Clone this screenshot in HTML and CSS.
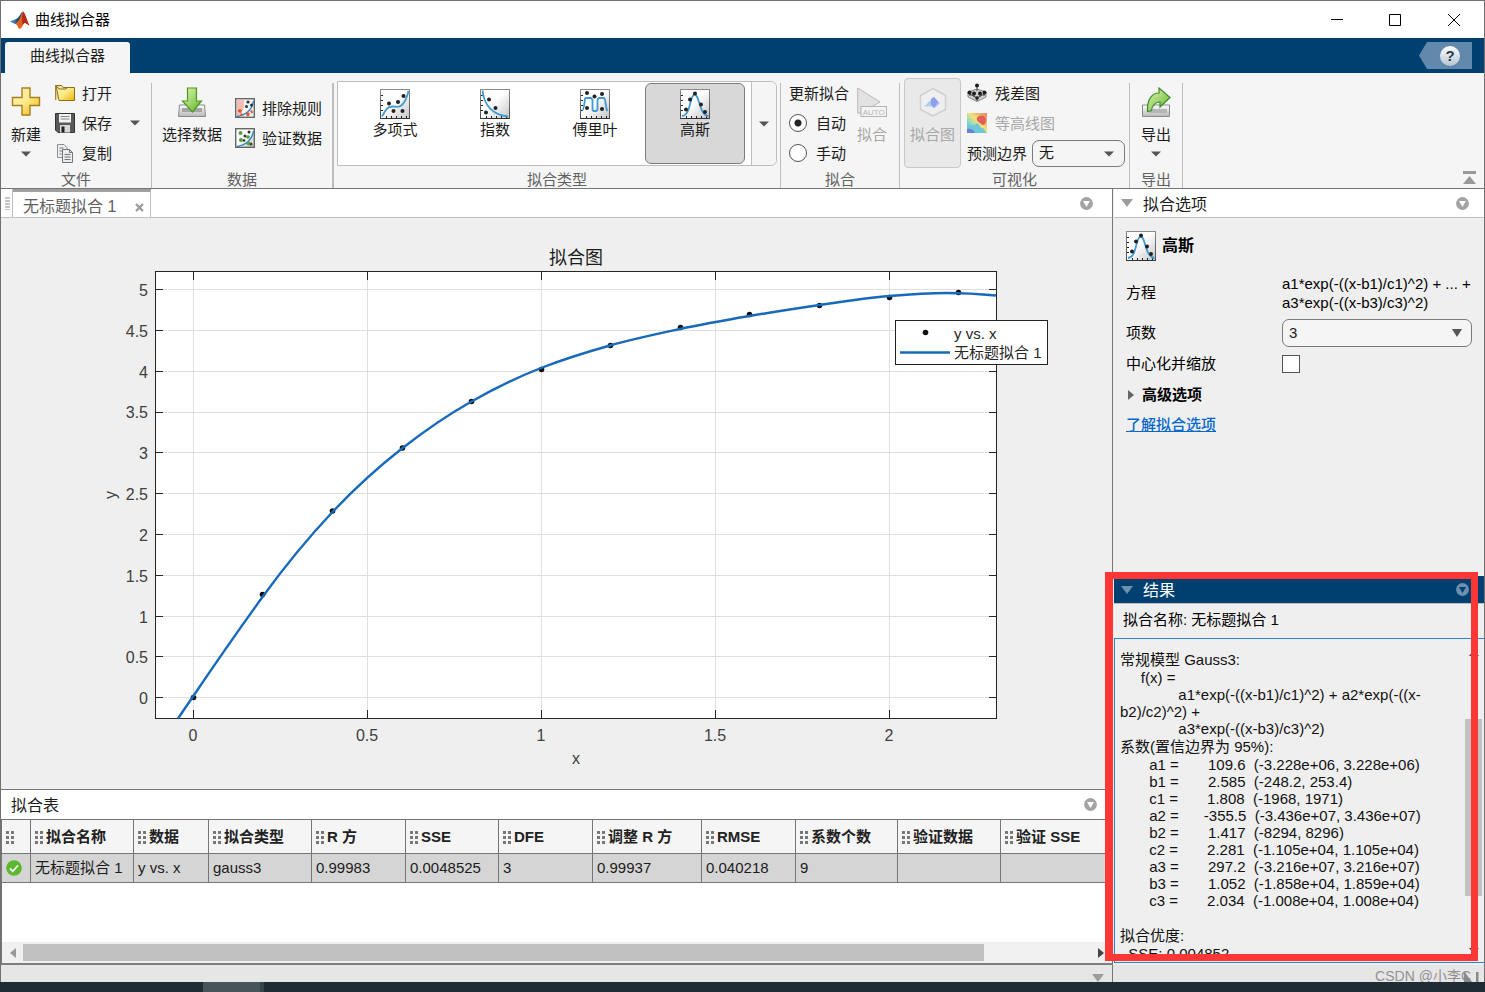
FILE: index.html
```html
<!DOCTYPE html>
<html lang="zh-CN">
<head>
<meta charset="utf-8">
<title>曲线拟合器</title>
<link rel="stylesheet" href="styles.css">
</head>
<body>
<svg class="defs" width="0" height="0" aria-hidden="true">
  <defs>
    <linearGradient id="gFrame" x1="0" y1="0" x2="1" y2="1"><stop offset=".45" stop-color="#fff"/><stop offset="1" stop-color="#c4c4c4"/></linearGradient>
    <linearGradient id="gEdge" x1="0" y1="0" x2="0" y2="1"><stop offset="0" stop-color="#8a8a8a"/><stop offset="1" stop-color="#4a4a4a"/></linearGradient>
    <linearGradient id="gGold" x1="0" y1="0" x2="1" y2="1"><stop offset="0" stop-color="#fff7c0"/><stop offset=".5" stop-color="#fbe98a"/><stop offset="1" stop-color="#efb400"/></linearGradient>
    <linearGradient id="gGreen" x1="0" y1="0" x2="1" y2="1"><stop offset="0" stop-color="#e6f7b4"/><stop offset="1" stop-color="#5db329"/></linearGradient>
    <linearGradient id="gTray" x1="0" y1="0" x2="0" y2="1"><stop offset="0" stop-color="#fff"/><stop offset="1" stop-color="#b8b8b8"/></linearGradient>
    <linearGradient id="gHeat" x1="0" y1="1" x2="1" y2="0"><stop offset="0" stop-color="#6c9ddd"/><stop offset=".3" stop-color="#7fd9d0"/><stop offset=".55" stop-color="#f2e27a"/><stop offset="1" stop-color="#e88468"/></linearGradient>
    <symbol id="frame" viewBox="0 0 30 30">
      <rect x=".5" y=".5" width="29" height="29" fill="url(#gFrame)" stroke="url(#gEdge)"/>
      <path d="M1 6.5h2M1 11.5h2M1 16.5h2M1 21.5h2M6.5 29v-2M11.5 29v-2M16.5 29v-2M21.5 29v-2M26.5 29v-2" stroke="#222"/>
      <path d="M.5 29.5h29" stroke="#333"/>
    </symbol>
    <symbol id="poly" viewBox="0 0 30 30">
      <use href="#frame"/>
      <path d="M2 27.500C5 22 7 17.500 12 17.500S19 19 22 16 27 8 28.500 2" fill="none" stroke="#3f9bd3" stroke-width="1.800"/>
      <g fill="#222"><circle cx="9" cy="14.500" r="2"/><circle cx="18" cy="13" r="2"/><circle cx="23.500" cy="7" r="2"/><circle cx="13.500" cy="22" r="2"/><circle cx="22.500" cy="22" r="2"/></g>
    </symbol>
    <symbol id="expo" viewBox="0 0 30 30">
      <use href="#frame"/>
      <path d="M2.500 1.500C4 17 14 26.500 28 27.500" fill="none" stroke="#3f9bd3" stroke-width="1.800"/>
      <g fill="#222"><circle cx="9" cy="10.500" r="2"/><circle cx="15.500" cy="19" r="2"/><circle cx="6" cy="23.500" r="2"/></g>
    </symbol>
    <symbol id="fourier" viewBox="0 0 30 30">
      <use href="#frame"/>
      <path d="M2 21.500C4 21 4 17 5 9.500l1-.5h5l1.500 1.500V21l1 1h3l1-1V10.500l1.500-1.500h5l1 1.500 1.500 9.500 1 2" fill="none" stroke="#3f9bd3" stroke-width="1.800"/>
      <g fill="#222"><circle cx="7" cy="4" r="2"/><circle cx="14.500" cy="7.500" r="2"/><circle cx="22" cy="5" r="2"/><circle cx="7" cy="19" r="2"/><circle cx="22" cy="20" r="2"/></g>
    </symbol>
    <symbol id="gauss" viewBox="0 0 30 30">
      <use href="#frame"/>
      <path d="M2 27C11 26.500 9.500 6 14.500 5.500S19 26 28.500 27" fill="none" stroke="#3f9bd3" stroke-width="1.800"/>
      <g fill="#222"><circle cx="15" cy="4.500" r="2"/><circle cx="10" cy="10.500" r="2"/><circle cx="21" cy="15.500" r="2"/><circle cx="6" cy="20.500" r="2"/><circle cx="25" cy="23" r="2"/></g>
    </symbol>
    <symbol id="caret" viewBox="0 0 10 6"><path d="M0 .5h10L5 5.500z" fill="#555"/></symbol>
    <symbol id="menuDot" viewBox="0 0 13 13"><circle cx="6.500" cy="6.500" r="6.400" fill="currentColor"/><path class="dotin" d="M3 4h7L6.500 10z"/></symbol>
    <symbol id="fold" viewBox="0 0 12 8"><path d="M0 0h12L6 8z" fill="currentColor"/></symbol>
  </defs>
</svg>

<div class="window">
  <header class="titlebar">
    <svg class="logo" viewBox="0 0 20 18"><path d="M0 10.500 6 8l3 2-4 3z" fill="#3a82b8"/><path d="M6 8C9 7 10 3 12.500.5L10 10 5 13z" fill="#264f78"/><path d="M5 13c2 0 3 3 4 5 4-1 4-6 6-6 2 .5 3 2 4.500 2.500C17 10 15 1 12.800.5 11.500 3 11 6 8.500 10z" fill="#e0641e"/><path d="M12.800.5C11.500 7 12.500 10 12.500 14c1-1.500 1.500-2 2.500-2 2 .5 3 2 4.500 2.500C17 10 15 1 12.800.5z" fill="#b22a18"/></svg>
    <h1 class="title">曲线拟合器</h1>
    <button class="winbtn" aria-label="最小化"><svg viewBox="0 0 12 12"><path d="M0 5.500h12"/></svg></button>
    <button class="winbtn" aria-label="最大化"><svg viewBox="0 0 12 12"><path d="M.5.500h11v11H.5z"/></svg></button>
    <button class="winbtn" aria-label="关闭"><svg viewBox="0 0 12 12"><path d="M0 0l12 12M12 0 0 12"/></svg></button>
  </header>

  <nav class="tabstrip">
    <button class="apptab">曲线拟合器</button>
    <button class="help" aria-label="帮助"><span class="helpmark">?</span></button>
  </nav>

  <section class="ribbon">
    <div class="group">
      <div class="gbody file">
        <button class="big"><svg class="ic30" viewBox="0 0 30 30"><path d="M11 1h8v9.500h9.500v8H19V28h-8v-9.500H1.500v-8H11z" fill="url(#gGold)" stroke="#a87f1d" stroke-width="1.400"/></svg><span>新建</span><svg class="caret"><use href="#caret"/></svg></button>
        <div class="rows">
          <button class="small"><svg class="ic20" viewBox="0 0 20 20"><path d="M.7 17V2.500h6l1.500 2H17v3" fill="#f7e2a0" stroke="#8d6e1c"/><path d="M1 2.500 4 6H11l1.500-1.500h7v13H4z" fill="url(#gGold)" stroke="#8d6e1c"/></svg><span>打开</span></button>
          <button class="small"><svg class="ic20" viewBox="0 0 20 20"><path d="M.5.500h19v19H3l-2.500-2.500z" fill="#5a5a5a" stroke="#333"/><rect x="4" y="1" width="12" height="8.500" fill="#f2f2f2"/><path d="M5.500 3.500h9M5.500 6h9" stroke="#888"/><rect x="5" y="12" width="10" height="7.500" fill="#d8d8d8"/><rect x="6.500" y="13.500" width="3" height="6" fill="#222"/></svg><span>保存</span></button>
          <button class="small"><svg class="ic20" viewBox="0 0 20 20"><path d="M2.500 1.500H9l3 3v10H2.500z" fill="#eee" stroke="#8a8f93"/><path d="M4.500 5h4M4.500 8h3M4.500 11h2" stroke="#777"/><path d="M7.500 6.500h7l3 3v10h-10z" fill="#e9edf0" stroke="#70767a"/><path d="M9.500 11.500h6M9.500 14h6M9.500 16.500h6" stroke="#777"/><path d="M14.500 6.500v3h3" fill="none" stroke="#70767a"/></svg><span>复制</span></button>
        </div>
        <button class="mini" aria-label="更多保存"><svg class="caret"><use href="#caret"/></svg></button>
      </div>
      <div class="glabel">文件</div>
    </div>

    <div class="group wide">
      <div class="gbody data">
        <button class="big"><svg class="ic30" viewBox="0 0 30 30"><path d="M2.500 18h25l1 11.500h-27z" fill="url(#gTray)" stroke="#8a8a8a"/><path d="M5 21h20v4H5z" fill="#a5a5a5"/><path d="M10.500 1h9v13h5L15.500 25 5.500 14h5z" fill="url(#gGreen)" stroke="#4b9a1f" stroke-width="1.200"/></svg><span>选择数据</span></button>
        <div class="rows two">
          <button class="small"><svg class="ic20" viewBox="0 0 20 20"><rect x=".7" y=".7" width="18.600" height="18.600" fill="#f3f3f3" stroke="#666" stroke-width="1.400"/><path d="M2 1.500h7V10l-5 8H2z" fill="#f4bdb4"/><path d="M2 18.500C11 17 17 12 18.500 3" fill="none" stroke="#2c83c4" stroke-width="1.500"/><g fill="#333"><circle cx="13" cy="4" r="1.600"/><circle cx="16.500" cy="7" r="1.500"/><circle cx="11.500" cy="8.500" r="1.500"/></g><g fill="#e3572b"><path d="m3 12 2-1 2 1-1 3-3-1zM11 16l2-2 2 2-1 2-2 .5zM15 13l2-1 1 2-1 2zM5 16l2-1 1 2-2 1z"/></g></svg><span>排除规则</span></button>
          <button class="small"><svg class="ic20" viewBox="0 0 20 20"><rect x=".7" y=".7" width="18.600" height="18.600" fill="url(#gFrame)" stroke="#666" stroke-width="1.400"/><path d="M2 18.500C11 17 17 12 18.500 3" fill="none" stroke="#2c83c4" stroke-width="1.500"/><g fill="#333"><circle cx="14" cy="4" r="1.500"/><circle cx="10" cy="8" r="1.500"/><circle cx="16" cy="16" r="1.500"/><circle cx="9" cy="12.500" r="1.300"/></g><g fill="#4ca43a"><circle cx="5.500" cy="5" r="2"/><circle cx="6" cy="12" r="2"/><circle cx="13" cy="9" r="1.800"/><circle cx="13.500" cy="15.500" r="1.900"/></g></svg><span>验证数据</span></button>
        </div>
      </div>
      <div class="glabel">数据</div>
    </div>

    <div class="group">
      <div class="gbody fits">
        <div class="gallery">
          <button class="fit"><svg class="ic30"><use href="#poly"/></svg><span>多项式</span></button>
          <button class="fit"><svg class="ic30"><use href="#expo"/></svg><span>指数</span></button>
          <button class="fit"><svg class="ic30"><use href="#fourier"/></svg><span>傅里叶</span></button>
          <button class="fit on"><svg class="ic30"><use href="#gauss"/></svg><span>高斯</span></button>
          <button class="more" aria-label="更多拟合类型"><svg class="caret"><use href="#caret"/></svg></button>
        </div>
      </div>
      <div class="glabel">拟合类型</div>
    </div>

    <div class="group">
      <div class="gbody update">
        <div class="rows">
          <span class="rowtext"><span>更新拟合</span></span>
          <label class="radio"><input type="radio" name="update" checked><span>自动</span></label>
          <label class="radio"><input type="radio" name="update"><span>手动</span></label>
        </div>
        <button class="big off" disabled><svg class="ic30" viewBox="0 0 30 30"><path d="M.7 1 23 15 4 26H.7z" fill="#e2e2e2" stroke="#b9b9b9"/><rect x="4" y="19.500" width="25.500" height="10" fill="#f4f4f4" stroke="#b4b4b4"/><text x="16.700" y="27.500" class="auto" text-anchor="middle">AUTO</text></svg><span>拟合</span></button>
      </div>
      <div class="glabel">拟合</div>
    </div>

    <div class="group">
      <div class="gbody visual">
        <button class="big off toggle" disabled><svg class="ic30" viewBox="0 0 30 30"><path d="M15 1.500 27.500 8.500v14L15 29 2.500 22.500v-14z" fill="#efefef" stroke="#cfcfcf" stroke-width="1.500"/><path d="M6 19c3-1 5-5 7-6l3-3 3 3 3 3-3 3-3 2-3-2z" fill="#b5bff0"/><path d="m13 12 3-2 4 5-4 6-3-3z" fill="#8ca0ee"/><path d="m6 19.500 6-3 2 3z" fill="#a7d9e4"/></svg><span>拟合图</span></button>
        <div class="rows">
          <button class="small"><svg class="ic20" viewBox="0 0 20 20"><path d="M1 9 10 6l9 3v5l-9 4.500L1 14z" fill="#cfcfcf" stroke="#888"/><path d="M1 10 10 15l9-5M10 15v3M10 1.500V8M3 9v4M7 10v4M13 10v4M17 9v4" stroke="#444" fill="none"/><g fill="#1c1c1c"><circle cx="10" cy="2.500" r="2"/><circle cx="2.500" cy="9.500" r="2"/><circle cx="17.500" cy="9.500" r="2"/><circle cx="7" cy="10.500" r="2"/><circle cx="13" cy="10.500" r="2"/><circle cx="10" cy="15" r="1.800"/></g></svg><span>残差图</span></button>
          <button class="small off" disabled><svg class="ic20" viewBox="0 0 20 20"><rect width="20" height="20" fill="url(#gHeat)"/><path d="M10 5c3-4 9-3 9 2s-3 6-5 4-5-3-4-6z" fill="#e0605a"/><path d="M0 12c4-2 6 2 9-1s3 4 6 4 2 3 5 5H0z" fill="#6fc6d6"/><path d="M0 16c4-1 7 1 8 4H0z" fill="#6b7fd4"/></svg><span>等高线图</span></button>
          <div class="bound"><label for="bound">预测边界</label><span class="selwrap"><select id="bound"><option>无</option></select><svg class="caret"><use href="#caret"/></svg></span></div>
        </div>
      </div>
      <div class="glabel">可视化</div>
    </div>

    <div class="group">
      <div class="gbody export">
        <button class="big"><svg class="ic30" viewBox="0 0 30 30"><path d="M1.500 18h27v11.500h-27z" fill="url(#gTray)" stroke="#8a8a8a"/><path d="M8 22h18v4H8z" fill="#b5b5b5"/><path d="M18 6V1l11 9.500L19 20v-5c-5 0-8 4-8.500 8.500l-4 1C6 12 11 6 18 6z" fill="url(#gGreen)" stroke="#3f8a2c" stroke-width="1.200"/></svg><span>导出</span><svg class="caret"><use href="#caret"/></svg></button>
      </div>
      <div class="glabel">导出</div>
    </div>
    <button class="collapse" aria-label="折叠工具条"><svg viewBox="0 0 13 13"><path d="M0 0h13v3H0zM6.500 5 13 13H0z" fill="#999"/></svg></button>
  </section>

  <main class="main">
    <div class="left">
      <div class="docbar">
        <span class="grip"></span>
        <div class="doctab"><span>无标题拟合 1</span><button class="close" aria-label="关闭标签"><svg viewBox="0 0 9 9"><path d="M1 1l7 7M8 1 1 8" stroke="#999" stroke-width="2.200"/></svg></button></div>
        <button class="dot" aria-label="文档操作"><svg><use href="#menuDot"/></svg></button>
      </div>

      <figure class="figure">
        <svg class="plot" viewBox="1 218 1111 571" role="img" aria-label="拟合图">
          <rect x="155.500" y="271.500" width="841" height="447" fill="#fff"/>
          <path class="grid" d="M193.500 272v446M367.500 272v446M541.500 272v446M715.500 272v446M889.500 272v446M156 289.500h840M156 330.500h840M156 371.500h840M156 412.500h840M156 452.500h840M156 493.500h840M156 534.500h840M156 575.500h840M156 616.500h840M156 656.500h840M156 697.500h840"/>
          <path class="axis" d="M193.500 272v8M367.500 272v8M541.500 272v8M715.500 272v8M889.500 272v8M193.500 718v-8M367.500 718v-8M541.500 718v-8M715.500 718v-8M889.500 718v-8M156 289.500h7M156 330.500h7M156 371.500h7M156 412.500h7M156 452.500h7M156 493.500h7M156 534.500h7M156 575.500h7M156 616.500h7M156 656.500h7M156 697.500h7M996 289.500h-7M996 330.500h-7M996 371.500h-7M996 412.500h-7M996 452.500h-7M996 493.500h-7M996 534.500h-7M996 575.500h-7M996 616.500h-7M996 656.500h-7M996 697.500h-7"/>
          <rect class="axis" x="155.500" y="271.500" width="841" height="447"/>
          <g fill="#111"><circle cx="193.500" cy="697.500" r="2.800"/><circle cx="262.500" cy="594.500" r="2.800"/><circle cx="332.500" cy="511" r="2.800"/><circle cx="402.500" cy="448" r="2.800"/><circle cx="471.500" cy="401.500" r="2.800"/><circle cx="541.500" cy="369.500" r="2.800"/><circle cx="610.500" cy="345.500" r="2.800"/><circle cx="680.500" cy="327.500" r="2.800"/><circle cx="749.500" cy="314.500" r="2.800"/><circle cx="819.500" cy="305.500" r="2.800"/><circle cx="889.500" cy="297.500" r="2.800"/><circle cx="958.500" cy="292.500" r="2.800"/></g>
          <path class="curve" d="M178 718.500L193 696.500C216 662.500 240 628 262.500 597S309 537 332 512.500 379 466.500 402 448.500 448.500 414.500 471.500 401.500 518 377 541 368 587 352 610 345.500 657 334 680 329 726 320 749.500 316 796 308.500 819.500 305 866 298 889.500 296 928 293 947 293 980 294 996 295.500"/>
          <g class="ticks" text-anchor="end"><text x="148" y="295.500">5</text><text x="148" y="336.500">4.5</text><text x="148" y="377.500">4</text><text x="148" y="417.500">3.5</text><text x="148" y="458.500">3</text><text x="148" y="499.500">2.5</text><text x="148" y="540.500">2</text><text x="148" y="581.500">1.5</text><text x="148" y="622.500">1</text><text x="148" y="662.500">0.5</text><text x="148" y="703.500">0</text></g>
          <g class="ticks" text-anchor="middle"><text x="193" y="741">0</text><text x="367" y="741">0.5</text><text x="541" y="741">1</text><text x="715" y="741">1.5</text><text x="889" y="741">2</text><text x="576" y="764">x</text><text transform="translate(116 495) rotate(-90)">y</text></g>
          <text class="ptitle" x="576" y="264" text-anchor="middle">拟合图</text>
          <rect x="895.500" y="320.500" width="152" height="44" fill="#fff" stroke="#222"/>
          <circle cx="925.500" cy="332.500" r="2.800" fill="#111"/>
          <path class="curve" d="M900 352.500h50"/>
          <text class="legend" x="954" y="339">y vs. x</text>
          <text class="legend" x="954" y="358">无标题拟合 1</text>
        </svg>
      </figure>

      <div class="panelbar table-title"><h2>拟合表</h2><button class="dot" aria-label="拟合表操作"><svg><use href="#menuDot"/></svg></button></div>
      <div class="tablebox">
        <table>
          <colgroup><col class="w29"><col class="w103"><col class="w75"><col class="w103"><col class="w94"><col class="w93"><col class="w94"><col class="w109"><col class="w94"><col class="w102"><col class="w103"><col></colgroup>
          <thead><tr><th aria-label="状态"></th><th>拟合名称</th><th>数据</th><th>拟合类型</th><th>R 方</th><th>SSE</th><th>DFE</th><th>调整 R 方</th><th>RMSE</th><th>系数个数</th><th>验证数据</th><th>验证 SSE</th></tr></thead>
          <tbody><tr><td><svg class="ok" viewBox="0 0 16 16"><circle cx="8" cy="8" r="7.800" fill="#5cb82c"/><path d="m4 8.500 2.800 2.800L12 5.500" fill="none" stroke="#fff" stroke-width="1.800"/></svg></td><td>无标题拟合 1</td><td>y vs. x</td><td>gauss3</td><td>0.99983</td><td>0.0048525</td><td>3</td><td>0.99937</td><td>0.040218</td><td>9</td><td></td><td></td></tr></tbody>
        </table>
        <div class="hscroll"><svg viewBox="0 0 6 10"><path d="M6 0v10L0 5z" fill="#999"/></svg><span class="htrack"><span class="hthumb"></span></span><svg viewBox="0 0 6 10"><path d="M0 0v10l6-5z" fill="#444"/></svg></div>
      </div>
    </div>

    <aside class="right">
      <div class="panelbar"><svg class="fold"><use href="#fold"/></svg><h2>拟合选项</h2><button class="dot" aria-label="拟合选项操作"><svg><use href="#menuDot"/></svg></button></div>
      <div class="options">
        <div class="fitname"><svg class="ic30"><use href="#gauss"/></svg><strong>高斯</strong></div>
        <div class="form">
          <span>方程</span><span class="eq">a1*exp(-((x-b1)/c1)^2) + ... +<br>a3*exp(-((x-b3)/c3)^2)</span>
          <label for="terms">项数</label><span class="selwrap terms"><select id="terms"><option>3</option></select><svg class="tri" viewBox="0 0 10 8"><path d="M0 0h10L5 8z" fill="#555"/></svg></span>
          <label for="center">中心化并缩放</label><input type="checkbox" id="center">
        </div>
        <button class="advanced"><svg viewBox="0 0 6 10"><path d="M0 0v10l6-5z" fill="#666"/></svg>高级选项</button>
        <a href="#learn" class="learn">了解拟合选项</a>
      </div>
      <section class="results">
        <div class="panelbar active"><svg class="fold"><use href="#fold"/></svg><h2>结果</h2><button class="dot" aria-label="结果操作"><svg><use href="#menuDot"/></svg></button></div>
        <div class="rname">拟合名称: 无标题拟合 1</div>
        <div class="rbody">
          <div class="rtext" tabindex="0">
            <p class="cjk">常规模型 Gauss3:</p>
            <p>     f(x) =</p>
            <p>              a1*exp(-((x-b1)/c1)^2) + a2*exp(-((x-</p>
            <p>b2)/c2)^2) +</p>
            <p>              a3*exp(-((x-b3)/c3)^2)</p>
            <p class="cjk">系数(置信边界为 95%):</p>
            <p>       a1 =       109.6  (-3.228e+06, 3.228e+06)</p>
            <p>       b1 =       2.585  (-248.2, 253.4)</p>
            <p>       c1 =       1.808  (-1968, 1971)</p>
            <p>       a2 =      -355.5  (-3.436e+07, 3.436e+07)</p>
            <p>       b2 =       1.417  (-8294, 8296)</p>
            <p>       c2 =       2.281  (-1.105e+04, 1.105e+04)</p>
            <p>       a3 =       297.2  (-3.216e+07, 3.216e+07)</p>
            <p>       b3 =       1.052  (-1.858e+04, 1.859e+04)</p>
            <p>       c3 =       2.034  (-1.008e+04, 1.008e+04)</p>
            <p> </p>
            <p class="cjk">拟合优度:</p>
            <p>  SSE: 0.004852</p>
          </div>
          <div class="vscroll"><svg viewBox="0 0 10 6"><path d="M0 6h10L5 0z" fill="#444"/></svg><span class="vtrack"><span class="vthumb"></span></span><svg viewBox="0 0 10 6"><path d="M0 0h10L5 6z" fill="#444"/></svg></div>
        </div>
        <div class="highlight"></div>
      </section>
    </aside>
  </main>

  <footer class="status">
    <div class="sleft"><svg class="fold"><use href="#fold"/></svg></div>
    <div class="sright"><span class="mark">CSDN @小李C</span><svg class="skip" viewBox="0 0 16 11"><path d="M0 0v11h8zM12 1h2.500v10H12z" fill="#8a8a8a"/></svg></div>
  </footer>
</div>
<div class="taskbar"><span></span></div>
</body>
</html>
```

FILE: styles.css
```css
* { box-sizing: border-box; }
body {
  margin: 0;
  height: 100vh;
  display: flex;
  flex-direction: column;
  overflow: hidden;
  font: 15px/20px "Liberation Sans", "Noto Sans CJK SC", sans-serif;
  color: #1c1c1c;
  background: #efefef;
}
h1, h2, p, figure { margin: 0; font-weight: 400; }
button {
  margin: 0;
  padding: 0;
  border: 0;
  background: none;
  font: inherit;
  color: inherit;
}
svg { display: block; flex: none; }
.defs { position: absolute; }
.window {
  flex: 1;
  min-height: 0;
  display: flex;
  flex-direction: column;
  border: 1px solid #707070;
  border-bottom: 0;
}

/* title bar */
.titlebar {
  flex: none;
  height: 37px;
  display: flex;
  align-items: center;
  padding-left: 9px;
  background: #fff;
}
.logo { width: 20px; height: 18px; }
.title { flex: 1; padding-left: 5px; font-size: 15px; color: #000; }
.winbtn { width: 58px; height: 36px; display: grid; place-items: center; }
.winbtn:last-child { width: 60px; }
.winbtn svg { width: 12px; height: 12px; fill: none; stroke: #000; }

/* blue tab strip */
.tabstrip {
  flex: none;
  height: 35px;
  display: flex;
  justify-content: space-between;
  padding: 4px 12px 0 4px;
  background: #004071;
}
.apptab {
  width: 125px;
  height: 31px;
  padding-bottom: 3px;
  border-radius: 3px 3px 0 0;
  background: #f5f5f5;
}
.help {
  width: 53px;
  height: 27px;
  display: grid;
  place-items: center;
  padding-left: 9px;
  background: #6189ab;
  clip-path: polygon(0 50%, 8px 0, 100% 0, 100% 100%, 8px 100%);
}
.helpmark {
  width: 20px;
  height: 20px;
  border-radius: 10px;
  background: linear-gradient(#fff, #b5c4d2);
  font-weight: 700;
  font-size: 15px;
  color: #2b3a4a;
}

/* ribbon */
.ribbon {
  flex: none;
  height: 116px;
  display: flex;
  align-items: flex-end;
  background: #f5f5f5;
  border-bottom: 1px solid #767676;
}
.group {
  height: 105px;
  display: flex;
  flex-direction: column;
  border-right: 1px solid #bdbdbd;
}
.group.wide { border-right-width: 2px; }
.gbody { height: 90px; margin-top: -5px; display: flex; align-items: flex-start; }
.glabel { height: 20px; line-height: 24px; text-align: center; color: #616161; }
.ic30 { width: 30px; height: 30px; }
.ic20 { width: 20px; height: 20px; }
.caret { width: 10px; height: 6px; }
.big {
  height: 90px;
  padding-top: 9px;
  display: flex;
  flex-direction: column;
  align-items: center;
}
.big span { margin-top: 8px; line-height: 20px; }
.big .caret { margin-top: 6px; }
.rows { display: flex; flex-direction: column; }
.small, .rowtext, .radio, .bound { height: 30px; display: flex; align-items: center; white-space: nowrap; }
.small span, .rowtext span, .radio span, .bound label { padding-top: 2px; }
.small { gap: 7px; }
.two { padding-top: 15px; }
.mini { height: 90px; margin-left: 18px; }
.off { color: #a8a8a8; }
.file { padding: 0 10px; }
.file .rows { margin-left: 14px; }
.file .mini { margin-right: 1px; }
.data { padding: 0 10px; }
.data .rows { margin-left: 13px; }
.fits { padding: 3px 3px 0; }
.gallery {
  display: flex;
  height: 85px;
  padding-left: 7px;
  background: #fff;
  border: 1px solid #bdbdbd;
  border-radius: 0 6px 6px 0;
}
.fit {
  width: 100px;
  height: 81px;
  margin-top: 1px;
  padding-top: 6px;
  display: flex;
  flex-direction: column;
  align-items: center;
  border-radius: 6px;
}
.fit span { margin-top: 1px; }
.fit.on { background: #d8d8d8; border: 1px solid #7d7d7d; padding-top: 5px; }
.more {
  width: 25px;
  margin-left: 6px;
  display: grid;
  place-items: center;
  background: #f5f5f5;
  border-left: 1px solid #bdbdbd;
  border-radius: 0 6px 6px 0;
}
.update { padding: 0 12px 0 8px; }
.update .big { margin-left: 8px; }
.radio { gap: 9px; }
.radio input {
  appearance: none;
  width: 18px;
  height: 18px;
  margin: 0;
  border: 1px solid #555;
  border-radius: 9px;
  background: #fff;
}
.radio input:checked { background: radial-gradient(circle, #222 3px, #fff 4px); }
.auto { font: 8px "Liberation Sans", sans-serif; fill: #b4b4b4; }
.visual { padding: 0 4px; }
.toggle { width: 57px; background: #e9e9e9; border: 1px solid #c8c8c8; border-radius: 4px; padding-top: 8px; }
.visual .rows { margin-left: 6px; }
.visual .small { gap: 8px; }
.bound { gap: 5px; }
.selwrap { position: relative; display: block; width: 93px; }
select {
  appearance: none;
  width: 100%;
  height: 27px;
  padding: 0 6px;
  border: 1px solid #7a7a7a;
  border-radius: 7px;
  background: #f5f5f5;
  font: inherit;
  color: #1c1c1c;
}
.selwrap svg { position: absolute; right: 11px; top: 11px; pointer-events: none; }
.export { padding: 0 11px; }
.collapse { margin: 0 8px 4px auto; }
.collapse svg { width: 13px; height: 13px; }

/* main area */
.main { flex: 1; min-height: 0; display: flex; }
.left { flex: 1; min-width: 0; display: flex; flex-direction: column; }
.docbar {
  flex: none;
  height: 29px;
  display: flex;
  background: #fff;
  border-bottom: 1px solid #c0c0c0;
}
.grip {
  width: 12px;
  border-right: 1px solid #bdbdbd;
  background: repeating-linear-gradient(#c4c4c4 0 2px, #fff 2px 3px) 4px 8px / 5px 13px no-repeat;
}
.doctab {
  width: 138px;
  display: flex;
  align-items: center;
  justify-content: space-between;
  padding: 5px 6px 0 10px;
  border-top: 3px solid #a0a0a0;
  border-right: 1px solid #bdbdbd;
  font-size: 16px;
  color: #616161;
}
.close svg { width: 9px; height: 9px; }
.dot { margin-left: auto; margin-right: 15px; color: #a3a3a3; --dot-inner: #fff; }
.docbar .dot { margin-right: 19px; }
.dot svg { width: 13px; height: 13px; }
.dotin { fill: var(--dot-inner); }
.figure { flex: 1; min-height: 0; background: #efefef; }
.plot { width: 100%; height: 100%; }
.grid { stroke: #dfdfdf; fill: none; }
.axis { stroke: #262626; fill: none; }
.curve { stroke: #1769ba; stroke-width: 2.400; fill: none; }
.ticks { font-size: 16px; fill: #404040; }
.ptitle { font-size: 18px; fill: #1c1c1c; }
.legend { font-size: 15px; fill: #262626; }

.panelbar {
  flex: none;
  height: 29px;
  display: flex;
  align-items: center;
  background: #fff;
  border-bottom: 1px solid #c0c0c0;
}
.panelbar h2 { padding-top: 3px; font-size: 16px; }
.fold { width: 12px; height: 8px; color: #9c9c9c; }
.table-title { height: 31px; padding-left: 10px; border-top: 1px solid #767676; border-bottom-color: #767676; }
.tablebox {
  flex: none;
  height: 145px;
  display: flex;
  flex-direction: column;
  justify-content: space-between;
  background: #fff;
  border-left: 1px solid #767676;
  border-bottom: 2px solid #7c807c;
}
table { width: 100%; table-layout: fixed; border-collapse: separate; border-spacing: 0; }
th, td {
  padding: 0 0 0 4px;
  border-right: 1px solid #767676;
  border-bottom: 1px solid #767676;
  text-align: left;
  white-space: nowrap;
}
th { height: 34px; background: #f5f5f5; color: #212121; }
th::before {
  content: "";
  display: inline-block;
  width: 8px;
  height: 13px;
  margin-right: 3px;
  vertical-align: -2px;
  background:
    repeating-linear-gradient(transparent 0 3px, #f5f5f5 3px 5px),
    linear-gradient(90deg, #777 3px, transparent 3px 5px, #777 5px);
}
td { height: 29px; background: #d5d5d5; }
th:last-child, td:last-child { border-right: 0; }
.ok { width: 16px; height: 16px; }
.w29 { width: 29px; }
.w75 { width: 75px; }
.w93 { width: 93px; }
.w94 { width: 94px; }
.w102 { width: 102px; }
.w103 { width: 103px; }
.w109 { width: 109px; }
.hscroll {
  height: 21px;
  display: flex;
  align-items: center;
  gap: 7px;
  padding: 0 8px;
  background: #f0f0f0;
}
.hscroll svg { width: 6px; height: 10px; }
.htrack { flex: 1; }
.hthumb { display: block; width: 90%; height: 17px; background: #c1c1c1; }

/* right column */
.right {
  width: 372px;
  flex: none;
  display: flex;
  flex-direction: column;
  padding-left: 1px;
  border-left: 1px solid #767676;
  background: #efefef;
}
.right .panelbar { padding-left: 7px; gap: 10px; }
.options { flex: 1; min-height: 0; padding: 13px 12px 0; color: #000; }
.fitname { display: flex; align-items: center; gap: 6px; font-size: 16px; }
.form {
  display: grid;
  grid-template-columns: 1fr 190px;
  grid-template-rows: 46px 28px 28px;
  row-gap: 3px;
  align-items: center;
  margin-top: 9px;
}
.eq { line-height: 19px; white-space: nowrap; }
.terms { width: auto; }
.terms select { height: 28px; }
.terms .tri { width: 10px; height: 8px; right: 10px; top: 10px; }
.form input {
  appearance: none;
  width: 18px;
  height: 18px;
  margin: 0;
  border: 1px solid #555;
  background: #fff;
}
.advanced { display: flex; align-items: center; gap: 8px; margin: 7px 0 10px 2px; font-weight: 700; }
.advanced svg { width: 6px; height: 10px; }
.learn { color: #0668cf; font-weight: 500; }
.results { position: relative; flex: none; height: 389px; display: flex; flex-direction: column; padding-bottom: 2px; }
.right .active { height: 28px; background: #004071; border-bottom-color: #bdbdbd; color: #fff; }
.active .fold, .active .dot { color: #6c90ae; }
.active .dot { --dot-inner: #004071; }
.rname { height: 34px; padding: 6px 9px; color: #000; }
.rbody {
  flex: 1;
  min-height: 0;
  display: flex;
  border: 1px solid #2d86d0;
  border-right: 0;
}
.rtext { flex: 1; padding: 11px 0 0 5px; overflow: hidden; color: #111; }
.rtext p { height: 17px; line-height: 17px; white-space: pre; }
.rtext .cjk { height: 19px; line-height: 19px; }
.vscroll {
  width: 20px;
  display: flex;
  flex-direction: column;
  align-items: center;
  padding: 11px 2px 8px 1px;
}
.vscroll svg { width: 10px; height: 6px; }
.vtrack { flex: 1; width: 17px; padding-top: 63px; }
.vthumb { display: block; height: 177px; background: #c1c1c1; }
.highlight {
  position: absolute;
  left: -9px;
  right: 6px;
  top: -4px;
  bottom: 4px;
  border: 7px solid #fc3735;
  border-left-width: 8px;
  pointer-events: none;
}

/* bottom bars */
.status { flex: none; height: 17px; display: flex; background: #e6e6e6; }
.sleft { flex: 1; display: flex; justify-content: flex-end; padding: 9px 8px 0 0; }
.sright {
  width: 372px;
  display: flex;
  justify-content: flex-end;
  border-left: 1px solid #767676;
  padding-right: 4px;
}
.mark { margin-right: -7px; font-size: 14px; line-height: 22px; color: #919191; }
.skip { width: 16px; height: 11px; margin-top: 6px; }
.taskbar { flex: none; height: 10px; padding-left: 203px; background: #1d2d33; }
.taskbar span { display: block; width: 61px; height: 10px; background: #46555a; border-right: 4px solid #33444a; }
```
